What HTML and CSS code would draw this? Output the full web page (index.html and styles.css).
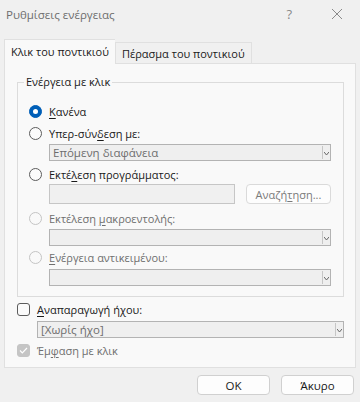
FILE: index.html
```html
<!DOCTYPE html>
<html lang="el">
<head>
<meta charset="utf-8">
<link rel="stylesheet" href="styles.css">
</head>
<body>
<div class="dialog">
  <div class="titlebar">
    <span class="title">Ρυθμίσεις ενέργειας</span>
    <span class="help">?</span>
    <svg class="close" width="12" height="12" viewBox="0 0 12 12"><path d="M1 1L11 11M11 1L1 11" stroke="#8a8a8a" stroke-width="1" fill="none"/></svg>
  </div>
  <div class="tabs">
    <div class="tab active">Κλικ του ποντικιού</div>
    <div class="tab">Πέρασμα του ποντικιού</div>
  </div>
  <div class="panel">
    <fieldset class="group">
      <legend>Ενέργεια με κλικ</legend>
      <div class="row r1"><span class="radio checked"></span><span class="lbl"><u>Κ</u>ανένα</span></div>
      <div class="row r2"><span class="radio"></span><span class="lbl">Υπερ-σύν<u>δ</u>εση με:</span></div>
      <div class="combo c1"><span class="ctext">Επόμενη διαφάνεια</span><span class="carrow"><svg width="5" height="3" viewBox="0 0 5 3"><path d="M0 0L2.5 3L5 0" stroke="#666" stroke-width="1" fill="none"/></svg></span></div>
      <div class="row r3"><span class="radio"></span><span class="lbl">Εκτέ<u>λ</u>εση προγράμματος:</span></div>
      <div class="inputrow">
        <div class="input"></div>
        <div class="btn small">Αναζή<u>τ</u>ηση...</div>
      </div>
      <div class="row r4 disabled"><span class="radio"></span><span class="lbl">Εκτέλεση <u>μ</u>ακροεντολής:</span></div>
      <div class="combo c2"><span class="ctext"></span><span class="carrow"><svg width="5" height="3" viewBox="0 0 5 3"><path d="M0 0L2.5 3L5 0" stroke="#666" stroke-width="1" fill="none"/></svg></span></div>
      <div class="row r5 disabled"><span class="radio"></span><span class="lbl"><u>Ε</u>νέργεια αντικειμένου:</span></div>
      <div class="combo c3"><span class="ctext"></span><span class="carrow"><svg width="5" height="3" viewBox="0 0 5 3"><path d="M0 0L2.5 3L5 0" stroke="#666" stroke-width="1" fill="none"/></svg></span></div>
    </fieldset>
    <div class="row s1"><span class="check"></span><span class="lbl"><u>Α</u>ναπαραγωγή ήχου:</span></div>
    <div class="combo sound"><span class="ctext">[Χωρίς ήχο]</span><span class="carrow"><svg width="5" height="3" viewBox="0 0 5 3"><path d="M0 0L2.5 3L5 0" stroke="#666" stroke-width="1" fill="none"/></svg></span></div>
    <div class="row s2 disabled"><span class="check checked"><svg width="9" height="7" viewBox="0 0 9 7"><path d="M1 3.5L3.3 5.8L8 1" stroke="#fff" stroke-width="1.2" fill="none"/></svg></span><span class="lbl">Έμ<u>φ</u>αση με κλικ</span></div>
  </div>
  <div class="buttons">
    <div class="btn main">OK</div>
    <div class="btn main">Άκυρο</div>
  </div>
</div>
</body>
</html>
```
FILE: styles.css
```css
html, body {
  margin: 0;
  padding: 0;
  background: #f0f0f0;
}
body {
  width: 360px;
  height: 402px;
  overflow: hidden;
  font-family: "Open Sans", "Noto Sans", sans-serif;
  font-size: 11px;
  color: #1a1a1a;
}
u { text-decoration: underline; text-underline-offset: 2px; }
.dialog {
  display: flex;
  flex-direction: column;
}
.titlebar {
  height: 30px;
  display: flex;
  align-items: center;
  padding-left: 6px;
  padding-bottom: 2px;
  box-sizing: border-box;
}
.title {
  color: #6e6e6e;
  font-size: 11.5px;
  flex: 1;
}
.help {
  color: #8a8a8a;
  font-size: 13px;
  margin-right: 39px;
}
.close { margin-right: 17px; }
.tabs {
  display: flex;
  align-items: flex-end;
  padding: 9px 0 0 4px;
  margin-bottom: -1px;
  position: relative;
  z-index: 1;
}
.tab {
  box-sizing: border-box;
  height: 21px;
  padding: 0 6px;
  border: 1px solid #e0e0e0;
  border-bottom: none;
  display: flex;
  align-items: center;
  background: #f0f0f0;
  margin-bottom: 1px;
  color: #1a1a1a;
  white-space: nowrap;
  font-size: 11px;
}
.tab.active {
  height: 25px;
  width: 111px;
  background: #f9f9f9;
  margin-bottom: 0;
  padding: 0 0 1px 6px;
  border-right: none;
}
.tab:not(.active) {
  width: 137px;
  padding-left: 6px;
}
.panel {
  margin: 0 4px;
  border: 1px solid #e0e0e0;
  background: #f9f9f9;
  padding: 10px 11px 8px 12px;
  display: flex;
  flex-direction: column;
}
.group {
  margin: 0;
  border: 1px solid #dcdcdc;
  padding: 12px 12px 10px 11px;
  min-width: 0;
}
.group legend {
  padding: 0 2px;
  margin-left: -5px;
  line-height: 16px;
  color: #1a1a1a;
}
.row {
  height: 18px;
  display: flex;
  align-items: center;
  gap: 7px;
  white-space: nowrap;
}
.r2 { margin-top: 4px; }
.r3 { margin-top: 4px; }
.r4 { margin-top: 5px; }
.r5 { margin-top: 2px; }
.c1 { margin-top: 2px; }
.c2 { margin-top: 2px; }
.c3 { margin-top: 3px; }
.disabled .lbl { color: #6f6f6f; }
.radio {
  width: 13px;
  height: 13px;
  box-sizing: border-box;
  border-radius: 50%;
  border: 1px solid #5c5c5c;
  background: #fbfbfb;
  flex: none;
  display: flex;
  align-items: center;
  justify-content: center;
}
.radio.checked {
  background: #005fb8;
  border-color: #005fb8;
}
.radio.checked::after {
  content: "";
  width: 5px;
  height: 5px;
  border-radius: 50%;
  background: #fff;
}
.disabled .radio {
  border-color: #c4c4c4;
  background: #f9f9f9;
}
.combo {
  height: 17px;
  box-sizing: border-box;
  border: 1px solid #b3b3b3;
  background: #efefef;
  display: flex;
  align-items: center;
  margin-left: 20px;
}
.ctext {
  flex: 1;
  padding-left: 3px;
  color: #6d6d6d;
  line-height: 15px;
  white-space: nowrap;
  font-size: 11.5px;
}
.carrow {
  width: 8px;
  height: 13px;
  border-left: 1px solid #c6c6c6;
  display: flex;
  align-items: center;
  justify-content: center;
  padding-top: 1px;
  box-sizing: border-box;
}
.inputrow {
  display: flex;
  margin: 1px 0 0 20px;
  gap: 11px;
  height: 20px;
}
.input {
  width: 186px;
  box-sizing: border-box;
  border: 1px solid #c6c6c6;
  background: #f0f0f0;
}
.btn {
  box-sizing: border-box;
  border: 1px solid #d0d0d0;
  border-radius: 4px;
  background: #fdfdfd;
  display: flex;
  align-items: center;
  justify-content: center;
}
.btn.small {
  width: 85px;
  color: #7a7a7a;
  border-color: #dadada;
}
.s1 { margin-top: 3px; }
.sound { margin-top: 3px; margin-left: 20px; }
.s2 { margin-top: 3px; }
.check {
  width: 13px;
  height: 13px;
  box-sizing: border-box;
  border: 1px solid #5c5c5c;
  border-radius: 3px;
  background: #fbfbfb;
  flex: none;
  display: flex;
  align-items: center;
  justify-content: center;
}
.check.checked {
  background: #c5c5c5;
  border-color: #c5c5c5;
}
.buttons {
  display: flex;
  justify-content: flex-end;
  gap: 11px;
  padding: 7px 6px 0 0;
}
.btn.main {
  width: 73px;
  height: 20px;
  color: #1a1a1a;
  font-size: 11.5px;
}
```
